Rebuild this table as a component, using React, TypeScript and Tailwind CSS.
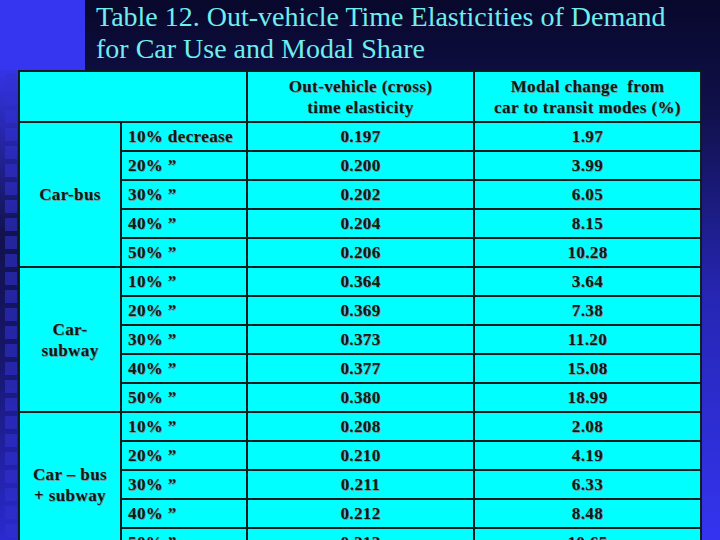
const groups = [
  {
    name: <>Car-bus</>,
    rows: [
      ["10% decrease", "0.197", "1.97"],
      ["20% ”", "0.200", "3.99"],
      ["30% ”", "0.202", "6.05"],
      ["40% ”", "0.204", "8.15"],
      ["50% ”", "0.206", "10.28"],
    ],
  },
  {
    name: (
      <>
        Car-
        <br />
        subway
      </>
    ),
    rows: [
      ["10% ”", "0.364", "3.64"],
      ["20% ”", "0.369", "7.38"],
      ["30% ”", "0.373", "11.20"],
      ["40% ”", "0.377", "15.08"],
      ["50% ”", "0.380", "18.99"],
    ],
  },
  {
    name: (
      <>
        Car – bus
        <br />+ subway
      </>
    ),
    rows: [
      ["10% ”", "0.208", "2.08"],
      ["20% ”", "0.210", "4.19"],
      ["30% ”", "0.211", "6.33"],
      ["40% ”", "0.212", "8.48"],
      ["50% ”", "0.213", "10.65"],
    ],
  },
];

const cell = "border-2 border-[#0b1c1c] bg-[#00ffff] p-0";

export default function App() {
  return (
    <div className="flex h-[540px] w-[720px] overflow-hidden bg-[linear-gradient(180deg,#08082c_0%,#10104a_20%,#2626b4_55%,#3434f0_100%)] font-['Liberation_Serif',serif]">
      {/* left stripe with squares */}
      <div className="flex w-[18px] shrink-0 flex-col">
        <div className="h-[70px] shrink-0 bg-[#3636f0]" />
        <div className="flex flex-1 flex-col gap-[5px] bg-[linear-gradient(180deg,#3434e6_0%,#12124e_35%,#16166a_60%,#2a2ad0_100%)] pl-[5px] pr-px pt-[4px]">
          {Array.from({ length: 26 }).map((_, i) => (
            <div key={i} className="h-[13px] shrink-0 bg-[#3030d0]/60" />
          ))}
        </div>
      </div>

      <div className="flex min-w-0 flex-1 flex-col">
        {/* title row */}
        <div className="flex h-[70px] shrink-0">
          <div className="w-[67px] shrink-0 bg-[#3636f0]" />
          <h1 className="pl-[11px] pt-px text-[28px] leading-[32px] font-normal text-[#70eeee]">
            Table 12. Out-vehicle Time Elasticities of Demand
            <br />
            for Car Use and Modal Share
          </h1>
        </div>

        <table className="w-[682px] table-fixed border-collapse text-[17px] font-bold tracking-[0.4px] text-[#0a1818] [text-shadow:1px_1px_0_#6f9a9a]">
          <colgroup>
            <col className="w-[102px]" />
            <col className="w-[126px]" />
            <col className="w-[227px]" />
            <col className="w-[227px]" />
          </colgroup>
          <thead>
            <tr className="h-[51px]">
              <td colSpan={2} className={cell} />
              <td className={`${cell} text-center leading-[21px]`}>
                Out-vehicle (cross)
                <br />
                time elasticity
              </td>
              <td className={`${cell} text-center leading-[21px]`}>
                Modal change&nbsp; from
                <br />
                car to transit modes (%)
              </td>
            </tr>
          </thead>
          <tbody>
            {groups.map((g, gi) =>
              g.rows.map((r, ri) => (
                <tr key={`${gi}-${ri}`} className="h-[29px]">
                  {ri === 0 && (
                    <td rowSpan={5} className={`${cell} text-center leading-[21px]`}>
                      {g.name}
                    </td>
                  )}
                  <td className={`${cell} pl-[6px] text-left leading-none`}>{r[0]}</td>
                  <td className={`${cell} text-center leading-none`}>{r[1]}</td>
                  <td className={`${cell} text-center leading-none`}>{r[2]}</td>
                </tr>
              ))
            )}
          </tbody>
        </table>
      </div>
    </div>
  );
}
